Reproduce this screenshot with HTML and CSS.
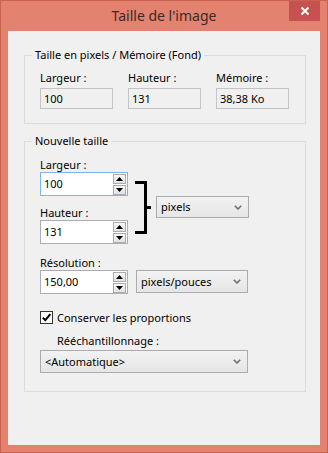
FILE: index.html
```html
<!DOCTYPE html>
<html lang="fr">
<head>
<meta charset="utf-8">
<title>Taille de l'image</title>
<link rel="stylesheet" href="styles.css">
</head>
<body>
<div class="window">
  <div class="titlebar">
    <span class="title">Taille de l'image</span>
    <div class="close">
      <svg width="10" height="10" viewBox="0 0 10 10"><path d="M1.5 1.5 L8.5 8.5 M8.5 1.5 L1.5 8.5" stroke="#fff" stroke-width="2" fill="none"/></svg>
    </div>
  </div>
  <div class="client">
    <fieldset class="group g1">
      <legend>Taille en pixels / Mémoire (Fond)</legend>
      <div class="info-grid">
        <div class="info">
          <div class="lbl">Largeur :</div>
          <div class="ro">100</div>
        </div>
        <div class="info">
          <div class="lbl">Hauteur :</div>
          <div class="ro">131</div>
        </div>
        <div class="info">
          <div class="lbl">Mémoire :</div>
          <div class="ro">38,38 Ko</div>
        </div>
      </div>
    </fieldset>

    <fieldset class="group g2">
      <legend>Nouvelle taille</legend>
      <div class="dims">
        <div class="dim-col">
          <div class="lbl lbl-first">Largeur :</div>
          <div class="spin focus">
            <span class="val">100</span>
            <div class="spin-btns">
              <div class="sbtn"><svg width="7" height="4" viewBox="0 0 7 4"><path d="M0 4 L3.5 0 L7 4 Z" fill="#000"/></svg></div>
              <div class="sbtn"><svg width="7" height="4" viewBox="0 0 7 4"><path d="M0 0 L3.5 4 L7 0 Z" fill="#000"/></svg></div>
            </div>
          </div>
          <div class="lbl lbl-h">Hauteur :</div>
          <div class="spin">
            <span class="val">131</span>
            <div class="spin-btns">
              <div class="sbtn"><svg width="7" height="4" viewBox="0 0 7 4"><path d="M0 4 L3.5 0 L7 4 Z" fill="#000"/></svg></div>
              <div class="sbtn"><svg width="7" height="4" viewBox="0 0 7 4"><path d="M0 0 L3.5 4 L7 0 Z" fill="#000"/></svg></div>
            </div>
          </div>
        </div>
        <div class="bracket"><div class="stub"></div></div>
        <div class="select unit">
          <span>pixels</span>
          <svg class="chev" width="8" height="5" viewBox="0 0 8 5"><path d="M0.8 0.8 L4 4 L7.2 0.8" stroke="#707070" stroke-width="1.6" fill="none"/></svg>
        </div>
      </div>

      <div class="lbl lbl-res">Résolution :</div>
      <div class="row">
        <div class="spin">
          <span class="val">150,00</span>
          <div class="spin-btns">
            <div class="sbtn"><svg width="7" height="4" viewBox="0 0 7 4"><path d="M0 4 L3.5 0 L7 4 Z" fill="#000"/></svg></div>
            <div class="sbtn"><svg width="7" height="4" viewBox="0 0 7 4"><path d="M0 0 L3.5 4 L7 0 Z" fill="#000"/></svg></div>
          </div>
        </div>
        <div class="select res-unit">
          <span>pixels/pouces</span>
          <svg class="chev" width="8" height="5" viewBox="0 0 8 5"><path d="M0.8 0.8 L4 4 L7.2 0.8" stroke="#707070" stroke-width="1.6" fill="none"/></svg>
        </div>
      </div>

      <div class="check">
        <div class="box">
          <svg width="11" height="11" viewBox="0 0 11 11"><path d="M1.8 5.6 L4.3 8.2 L9.3 2.2" stroke="#000" stroke-width="2" fill="none"/></svg>
        </div>
        <span>Conserver les proportions</span>
      </div>

      <div class="lbl lbl-resample">Rééchantillonnage :</div>
      <div class="select wide">
        <span>&lt;Automatique&gt;</span>
        <svg class="chev" width="8" height="5" viewBox="0 0 8 5"><path d="M0.8 0.8 L4 4 L7.2 0.8" stroke="#707070" stroke-width="1.6" fill="none"/></svg>
      </div>
    </fieldset>
  </div>
</div>
</body>
</html>
```

FILE: styles.css
```css
html, body {
  margin: 0;
  padding: 0;
  background: #e3826f;
}

body {
  font-family: "Noto Sans", "Open Sans", sans-serif;
  font-size: 11px;
  color: #000;
}

.window {
  width: 328px;
  height: 453px;
  box-sizing: border-box;
  border: 1px solid #c9634f;
  background: #e3826f;
  display: flex;
  flex-direction: column;
}

.titlebar {
  height: 30px;
  flex: none;
  display: flex;
  align-items: flex-start;
  justify-content: center;
  position: relative;
}

.title {
  font-size: 14px;
  line-height: 20px;
  margin-top: 5px;
  color: #3a2a28;
}

.close {
  position: absolute;
  right: 7px;
  top: 0;
  width: 31px;
  height: 20px;
  background: #c75050;
  display: flex;
  align-items: center;
  justify-content: center;
}

.client {
  flex: 1;
  margin: 0 7px 7px 7px;
  background: #f0f0f0;
  display: flex;
  flex-direction: column;
  padding: 0 14px 0 16px;
}

.group {
  margin: 0;
  border: 1px solid #dcdcdc;
  padding: 0 15px;
  min-width: 0;
}

.group legend {
  padding: 0 3px;
  margin-left: -8px;
  line-height: 16px;
}

.g1 {
  margin-top: 16px;
  padding-bottom: 14px;
}

.g2 {
  margin-top: 9px;
  padding-bottom: 18px;
}

.lbl {
  line-height: 15px;
}

.info-grid {
  display: grid;
  grid-template-columns: 73px 73px 73px;
  column-gap: 15px;
  margin-top: 7px;
}

.ro {
  margin-top: 3px;
  height: 21px;
  box-sizing: border-box;
  border: 1px solid #c4c4c4;
  background: #f0f0f0;
  padding: 0 3px;
  line-height: 19px;
}

.dims {
  display: flex;
  align-items: flex-start;
}

.dim-col {
  width: 88px;
  display: flex;
  flex-direction: column;
}

.lbl-first {
  margin-top: 8px;
}

.lbl-h {
  margin-top: 9px;
}

.spin {
  width: 88px;
  height: 24px;
  box-sizing: border-box;
  border: 1px solid #abadb3;
  background: #fff;
  display: flex;
  align-items: center;
  justify-content: space-between;
  padding: 0 1px 0 3px;
}

.spin.focus {
  border-color: #7eb4ea;
}

.spin .val {
  line-height: 16px;
}

.spin-btns {
  display: flex;
  flex-direction: column;
  gap: 1px;
}

.sbtn {
  width: 13px;
  height: 10px;
  box-sizing: border-box;
  border: 1px solid #acacac;
  background: linear-gradient(#f6f6f6, #e2e2e2);
  display: flex;
  align-items: center;
  justify-content: center;
}

.bracket {
  width: 9px;
  height: 47px;
  margin-top: 32px;
  margin-left: 7px;
  border: 3px solid #000;
  border-left: none;
  position: relative;
  flex: none;
}

.stub {
  position: absolute;
  right: -7px;
  top: 22px;
  width: 4px;
  height: 3px;
  background: #000;
}

.select {
  height: 23px;
  box-sizing: border-box;
  border: 1px solid #acacac;
  background: linear-gradient(#f2f2f2, #e6e6e6);
  display: flex;
  align-items: center;
  justify-content: space-between;
  padding: 0 6px 0 4px;
  line-height: 16px;
}

.unit {
  width: 93px;
  height: 22px;
  margin-left: 9px;
  margin-top: 47px;
}

.lbl-res {
  margin-top: 11px;
}

.row {
  display: flex;
  gap: 8px;
}

.res-unit {
  width: 112px;
}

.check {
  display: flex;
  align-items: center;
  margin-top: 16px;
  gap: 4px;
}

.box {
  width: 13px;
  height: 13px;
  box-sizing: border-box;
  border: 1px solid #333;
  background: #fff;
  display: flex;
  align-items: center;
  justify-content: center;
}

.lbl-resample {
  margin-top: 8px;
  padding-left: 17px;
}

.wide {
  margin-top: 2px;
  width: 208px;
}
```
